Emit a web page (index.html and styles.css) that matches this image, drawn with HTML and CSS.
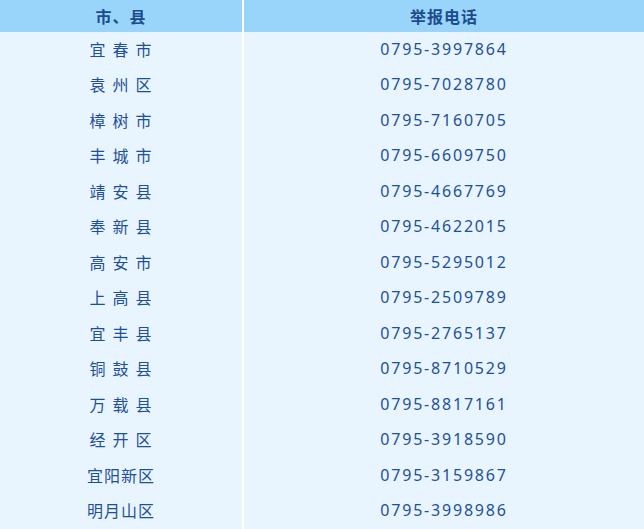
FILE: index.html
```html
<!DOCTYPE html>
<html lang="zh-CN">
<head>
<meta charset="utf-8">
<title>举报电话</title>
<link rel="stylesheet" href="styles.css">
</head>
<body>
<div class="table">
  <div class="head">市、县</div>
  <div class="head">举报电话</div>
  <div class="cell name">宜 春 市</div><div class="cell tel">0795-3997864</div>
  <div class="cell name">袁 州 区</div><div class="cell tel">0795-7028780</div>
  <div class="cell name">樟 树 市</div><div class="cell tel">0795-7160705</div>
  <div class="cell name">丰 城 市</div><div class="cell tel">0795-6609750</div>
  <div class="cell name">靖 安 县</div><div class="cell tel">0795-4667769</div>
  <div class="cell name">奉 新 县</div><div class="cell tel">0795-4622015</div>
  <div class="cell name">高 安 市</div><div class="cell tel">0795-5295012</div>
  <div class="cell name">上 高 县</div><div class="cell tel">0795-2509789</div>
  <div class="cell name">宜 丰 县</div><div class="cell tel">0795-2765137</div>
  <div class="cell name">铜 鼓 县</div><div class="cell tel">0795-8710529</div>
  <div class="cell name">万 载 县</div><div class="cell tel">0795-8817161</div>
  <div class="cell name">经 开 区</div><div class="cell tel">0795-3918590</div>
  <div class="cell name">宜阳新区</div><div class="cell tel">0795-3159867</div>
  <div class="cell name">明月山区</div><div class="cell tel">0795-3998986</div>
</div>
</body>
</html>
```

FILE: styles.css
```css
html, body {
  margin: 0;
  padding: 0;
  background: #ffffff;
}
.table {
  width: 644px;
  height: 529px;
  display: grid;
  grid-template-columns: 242px 1fr;
  grid-template-rows: 32px repeat(14, 1fr);
  column-gap: 2px;
  background: #ffffff;
  font-family: "Noto Sans", "Noto Sans CJK SC", sans-serif;
  color: #1f4f9c;
}
.head {
  background: #99d5fb;
  display: flex;
  align-items: center;
  justify-content: center;
  font-family: "Noto Sans CJK SC", sans-serif;
  font-weight: bold;
  font-size: 16px;
  letter-spacing: 1px;
  color: #1d4c8c;
  padding-bottom: 1px;
}
.cell {
  background: #e8f5fe;
  display: flex;
  align-items: center;
  justify-content: center;
  font-size: 16px;
  padding-bottom: 2px;
}
.name {
  font-family: "Noto Sans CJK SC", sans-serif;
  letter-spacing: 1px;
  word-spacing: 1.5px;
}
.tel {
  letter-spacing: 1.8px;
}
```
